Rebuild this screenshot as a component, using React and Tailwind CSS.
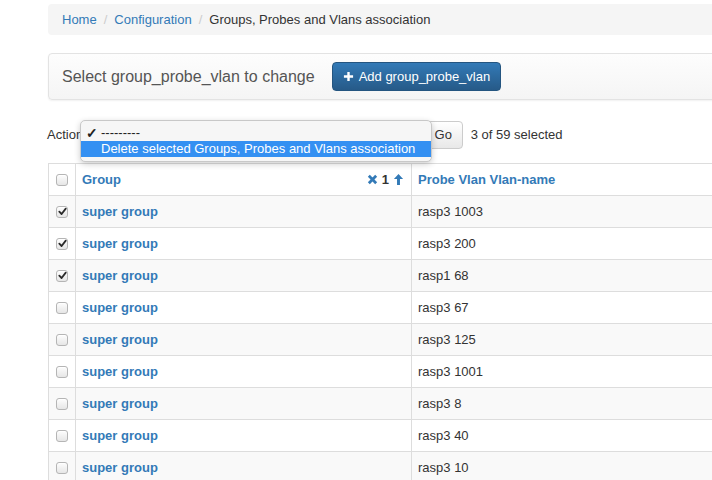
import React from 'react';

const rows = [
  { group: 'super group', vlan: 'rasp3 1003', checked: true },
  { group: 'super group', vlan: 'rasp3 200', checked: true },
  { group: 'super group', vlan: 'rasp1 68', checked: true },
  { group: 'super group', vlan: 'rasp3 67', checked: false },
  { group: 'super group', vlan: 'rasp3 125', checked: false },
  { group: 'super group', vlan: 'rasp3 1001', checked: false },
  { group: 'super group', vlan: 'rasp3 8', checked: false },
  { group: 'super group', vlan: 'rasp3 40', checked: false },
  { group: 'super group', vlan: 'rasp3 10', checked: false },
];

function Check({ checked }) {
  return (
    <span className="flex h-[12px] w-[12px] items-center justify-center rounded-[3px] border border-[#b5b5b5] bg-gradient-to-b from-[#fdfdfd] to-[#e6e6e6] shadow-[inset_0_1px_0_#fff]">
      {checked && (
        <svg width="9" height="9" viewBox="0 0 10 10">
          <path d="M1.5 5.2 L4 7.8 L8.6 1.8" fill="none" stroke="#2a2a2a" strokeWidth="2" strokeLinecap="round" strokeLinejoin="round" />
        </svg>
      )}
    </span>
  );
}

export default function App() {
  return (
    <div className="relative h-[480px] w-[712px] overflow-hidden bg-white text-[13px] text-[#333]" style={{ fontFamily: '"Liberation Sans", Arial, sans-serif' }}>
      <div className="w-[1000px] pl-[48px]">
        {/* Breadcrumb */}
        <div className="mt-[4px] flex h-[31px] items-center gap-[7px] rounded-[4px] bg-[#f5f5f5] pl-[14px]">
          <span className="text-[#337ab7]">Home</span>
          <span className="text-[#ccc]">/</span>
          <span className="text-[#337ab7]">Configuration</span>
          <span className="text-[#ccc]">/</span>
          <span>Groups, Probes and Vlans association</span>
        </div>

        {/* Header panel */}
        <div className="mt-[18px] flex h-[47px] items-center rounded-[4px] border border-[#e3e3e3] bg-gradient-to-b from-[#fdfdfd] to-[#f5f5f5] pl-[13px] shadow-[0_1px_2px_rgba(0,0,0,0.06)]">
          <span className="text-[16px] text-[#555]">Select group_probe_vlan to change</span>
          <button className="ml-[17px] flex h-[29px] items-center gap-[5px] rounded-[4px] border border-[#245580] bg-gradient-to-b from-[#337ab7] to-[#265a88] px-[10px] text-[13px] text-white">
            <svg width="11" height="11" viewBox="0 0 12 12">
              <path d="M6 1v10M1 6h10" stroke="#fff" strokeWidth="2.6" />
            </svg>
            Add group_probe_vlan
          </button>
        </div>

        {/* Actions */}
        <div className="mt-[21px] flex h-[28px] items-center">
          <span className="-ml-px">Action:</span>
          <div className="ml-[6px] h-[26px] w-[325px] rounded-[4px] border border-[#ccc] bg-white" />
          <button className="ml-[6px] h-[28px] w-[39px] rounded-[4px] border border-[#ccc] bg-gradient-to-b from-white to-[#e8e8e8] text-[13px]">Go</button>
          <span className="ml-[8px]">3 of 59 selected</span>
        </div>

        {/* Table */}
        <table className="mt-[14px] w-[952px] border-collapse border border-[#ddd]">
          <thead>
            <tr className="h-[32px] bg-white">
              <td className="w-[27px] border border-[#ddd] pl-[7px]">
                <Check checked={false} />
              </td>
              <td className="w-[336px] border border-[#ddd] px-[6px]">
                <div className="flex items-center">
                  <span className="font-bold text-[#337ab7]">Group</span>
                  <span className="ml-auto flex items-center gap-[4px] pr-[1px]">
                    <svg width="11" height="11" viewBox="0 0 12 12">
                      <path d="M2 2 L10 10 M10 2 L2 10" stroke="#337ab7" strokeWidth="3" />
                    </svg>
                    <span className="font-bold text-[#333]">1</span>
                    <svg width="11" height="13" viewBox="0 0 12 14">
                      <path d="M6 1 L11 6.5 H7.6 V13 H4.4 V6.5 H1 Z" fill="#337ab7" />
                    </svg>
                  </span>
                </div>
              </td>
              <td className="border border-[#ddd] px-[6px] font-bold text-[#337ab7]">Probe Vlan Vlan-name</td>
            </tr>
          </thead>
          <tbody>
            {rows.map((r, i) => (
              <tr key={i} className={`h-[32px] ${i % 2 === 0 ? 'bg-[#f9f9f9]' : 'bg-white'}`}>
                <td className="border border-[#ddd] pl-[7px]">
                  <Check checked={r.checked} />
                </td>
                <td className="border border-[#ddd] px-[6px] font-bold text-[#337ab7]">{r.group}</td>
                <td className="border border-[#ddd] px-[6px]">{r.vlan}</td>
              </tr>
            ))}
          </tbody>
        </table>
      </div>

      {/* Open select menu */}
      <div className="absolute left-[80px] top-[120px] w-[352px] rounded-[5px] border border-[#c8c8c8] bg-[#f6f6f6] pb-[4px] pt-[4px] shadow-[0_2px_6px_rgba(0,0,0,0.2)]" style={{ fontFamily: '"Liberation Sans", Arial, sans-serif' }}>
        <div className="flex h-[16px] items-center text-[13px] text-[#222]">
          <span className="w-[20px] pl-[5px] text-[14px] font-bold leading-none">✓</span>
          <span>---------</span>
        </div>
        <div className="flex h-[16px] items-center bg-[#3490f2] pl-[20px] text-[13px] text-white">
          Delete selected Groups, Probes and Vlans association
        </div>
      </div>
    </div>
  );
}
